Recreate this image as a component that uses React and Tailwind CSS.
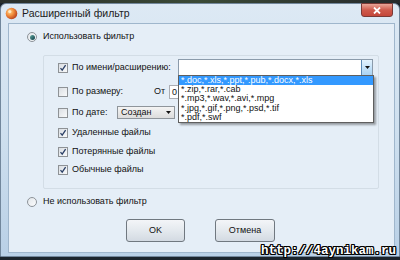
import React from 'react';

const Radio = ({ checked }) => (
  <span className="w-[10px] h-[10px] rounded-full border border-[#8d9399] bg-gradient-to-br from-[#e2e6ea] to-[#fbfcfd] flex items-center justify-center shrink-0">
    {checked && <span className="w-[5px] h-[5px] rounded-full bg-gradient-to-br from-[#5fa9a0] to-[#0f3d47]" />}
  </span>
);

const Check = ({ checked }) => (
  <span className="w-[10px] h-[10px] border border-[#8e9296] bg-gradient-to-br from-[#dadee3] to-[#f8f9fa] flex items-center justify-center shrink-0">
    {checked && (
      <svg width="8" height="8" viewBox="0 0 8 8">
        <path d="M1.5 4.2 L3.2 6.2 L6.6 1.2" fill="none" stroke="#2a3f66" strokeWidth="1.3" />
      </svg>
    )}
  </span>
);

const Arrow = () => (
  <svg width="5" height="3" viewBox="0 0 5 3"><path d="M0 0 H5 L2.5 3 Z" fill="#111" /></svg>
);

const exts = [
  '*.doc,*.xls,*.ppt,*.pub,*.docx,*.xls',
  '*.zip,*.rar,*.cab',
  '*.mp3,*.wav,*.avi,*.mpg',
  '*.jpg,*.gif,*.png,*.psd,*.tif',
  '*.pdf,*.swf',
];

export default function App() {
  return (
    <div className="w-[400px] h-[260px] bg-[#1b242c] relative overflow-hidden font-['Liberation_Sans',sans-serif] text-[9px] text-[#111]">
      <div className="h-[3px] bg-gradient-to-r from-[#2a2f2b] via-[#3b4a36] to-[#262a2c]" />

      {/* window frame */}
      <div className="h-[254px] rounded-t-[6px] border border-[#72879c] bg-gradient-to-b from-[#dde9f4] via-[#cfe0ef] to-[#b9d0e6] pl-[7px] pr-[4px] pb-[3px] flex flex-col">
        {/* title bar */}
        <div className="h-[19px] flex items-start justify-between">
          <div className="flex items-center gap-[4px] pt-[2px] -ml-[3px]">
            <svg width="13" height="13" viewBox="0 0 13 13">
              <defs>
                <radialGradient id="ic" cx="0.35" cy="0.35" r="0.7">
                  <stop offset="0" stopColor="#ffd48a" />
                  <stop offset="0.5" stopColor="#f08a3a" />
                  <stop offset="1" stopColor="#b6401e" />
                </radialGradient>
              </defs>
              <circle cx="6.5" cy="6.5" r="5.8" fill="url(#ic)" />
              <circle cx="4.8" cy="4.6" r="1.6" fill="#fff3d6" opacity="0.8" />
            </svg>
            <span className="text-[10.5px] text-[#1c1c1c]">Расширенный фильтр</span>
          </div>
          <div className="w-[32px] h-[14px] -mt-px mr-[2px] rounded-b-[3px] border border-[#7a3a36] bg-gradient-to-b from-[#e8a598] via-[#cf5a4c] to-[#c4473a] flex items-center justify-center">
            <svg width="8" height="7" viewBox="0 0 8 7">
              <path d="M1 0.5 L7 6.5 M7 0.5 L1 6.5" stroke="#fff" strokeWidth="1.8" />
            </svg>
          </div>
        </div>

        {/* client area */}
        <div className="flex-1 border border-[#9fb6cc] bg-[#e5eef7] flex flex-col">
          <div className="h-[14px] mt-[6px] pl-[18px] flex items-center gap-[6px]">
            <Radio checked />
            <span>Использовать фильтр</span>
          </div>

          {/* group box */}
          <div className="mt-[11px] ml-[34px] w-[336px] h-[134px] border border-[#d3dde6] rounded-[2px] pl-[14px] flex flex-col">
            <div className="h-[23px] flex items-center gap-[4px]">
              <Check checked />
              <span>По имени/расширению:</span>
              <div className="relative z-10 ml-auto mr-[5px] w-[195px] h-[17px] border border-[#8b9bab] bg-white flex justify-end">
                <div className="w-[11px] h-full border-l border-[#5b8ab7] bg-gradient-to-b from-[#e3f2fd] to-[#a9d3f4] flex items-center justify-center">
                  <Arrow />
                </div>
                <div className="absolute left-[-1px] top-full w-[196px] h-[48px] border border-[#5f5f5f] bg-white shadow-[2px_2px_2px_rgba(0,0,0,0.35)] flex flex-col">
                  {exts.map((e, i) => (
                    <div key={i} className={`h-[9.2px] leading-[9px] pl-[2px] ${i === 0 ? 'bg-[#3399ff] text-white' : 'text-[#111]'}`}>{e}</div>
                  ))}
                </div>
              </div>
            </div>

            <div className="h-[26px] flex items-center gap-[4px]">
              <Check />
              <span className="w-[78px]">По размеру:</span>
              <span className="w-[11px]">От</span>
              <div className="w-[60px] h-[14px] border border-[#abadb3] bg-white pl-[2px] leading-[12px]">0</div>
            </div>

            <div className="h-[15px] flex items-center gap-[4px]">
              <Check />
              <span className="w-[41px]">По дате:</span>
              <div className="w-[58px] h-[13px] border border-[#8f959b] bg-gradient-to-b from-[#f4f4f4] to-[#dcdcdc] flex items-center justify-between pl-[3px] pr-[3px]">
                <span>Создан</span>
                <Arrow />
              </div>
            </div>

            <div className="h-[26px] flex items-center gap-[4px]">
              <Check checked />
              <span>Удаленные файлы</span>
            </div>
            <div className="h-[12px] flex items-center gap-[4px]">
              <Check checked />
              <span>Потерянные файлы</span>
            </div>
            <div className="h-[24px] flex items-center gap-[4px]">
              <Check checked />
              <span>Обычные файлы</span>
            </div>
          </div>

          <div className="h-[14px] mt-[6px] pl-[18px] flex items-center gap-[6px]">
            <Radio />
            <span>Не использовать фильтр</span>
          </div>

          <div className="mt-[10px] pl-[117px] flex gap-[30px]">
            <div className="w-[59px] h-[23px] rounded-[3px] border border-[#707880] bg-gradient-to-b from-[#f3f5f8] via-[#e4e9ee] to-[#d3dae2] flex items-center justify-center">OK</div>
            <div className="w-[60px] h-[23px] rounded-[3px] border border-[#707880] bg-gradient-to-b from-[#f3f5f8] via-[#e4e9ee] to-[#d3dae2] flex items-center justify-center">Отмена</div>
          </div>
        </div>
      </div>

      <div className="absolute right-[4px] bottom-[2px] font-['Liberation_Mono',monospace] font-bold text-[12.5px] leading-[14px] text-white [text-shadow:1px_0_0_#000,-1px_0_0_#000,0_1px_0_#000,0_-1px_0_#000,1px_1px_0_#000,-1px_-1px_0_#000,1px_-1px_0_#000,-1px_1px_0_#000]">
        http://4aynikam.ru
      </div>
    </div>
  );
}
